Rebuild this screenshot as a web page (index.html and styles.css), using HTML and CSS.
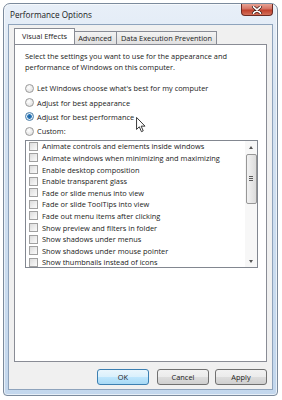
FILE: index.html
```html
<!DOCTYPE html>
<html lang="en">
<head>
    <meta charset="UTF-8">
    <title>Performance Options</title>
    <link rel="stylesheet" href="styles.css">
</head>
<body>
    <div class="window">
        <div class="titlebar">
            <span class="title">Performance Options</span>
            <span class="close">
                <svg width="12" height="8" viewBox="0 0 12 8">
                    <path d="M2.5 0.8 L9.5 7.2 M9.5 0.8 L2.5 7.2" stroke="#3a1b17" stroke-width="3" stroke-linecap="round"/>
                    <path d="M2.5 0.8 L9.5 7.2 M9.5 0.8 L2.5 7.2" stroke="#ffffff" stroke-width="1.6" stroke-linecap="round"/>
                </svg>
            </span>
        </div>

        <div class="client">
            <div class="tabs">
                <div class="tab tab-active">Visual Effects</div>
                <div class="tab">Advanced</div>
                <div class="tab">Data Execution Prevention</div>
            </div>

            <div class="panel">
                <p class="intro">Select the settings you want to use for the appearance and performance of Windows on this computer.</p>

                <div class="radios">
                    <div class="radio-row"><span class="radio"></span>Let Windows choose what's best for my computer</div>
                    <div class="radio-row"><span class="radio"></span>Adjust for best appearance</div>
                    <div class="radio-row"><span class="radio radio-on"></span>Adjust for best performance
                        <svg class="cursor" width="10" height="16" viewBox="0 0 11 18">
                            <path d="M0.5 0.5 L0.5 14 L3.6 11 L6 16.5 L8 15.6 L5.7 10.3 L10 10.3 Z" fill="#fff" stroke="#222" stroke-width="1" stroke-linejoin="round"/>
                        </svg>
                    </div>
                    <div class="radio-row"><span class="radio"></span>Custom:</div>
                </div>

                <div class="listbox">
                    <div class="items">
                        <div class="item"><span class="check"></span>Animate controls and elements inside windows</div>
                        <div class="item"><span class="check"></span>Animate windows when minimizing and maximizing</div>
                        <div class="item"><span class="check"></span>Enable desktop composition</div>
                        <div class="item"><span class="check"></span>Enable transparent glass</div>
                        <div class="item"><span class="check"></span>Fade or slide menus into view</div>
                        <div class="item"><span class="check"></span>Fade or slide ToolTips into view</div>
                        <div class="item"><span class="check"></span>Fade out menu items after clicking</div>
                        <div class="item"><span class="check"></span>Show preview and filters in folder</div>
                        <div class="item"><span class="check"></span>Show shadows under menus</div>
                        <div class="item"><span class="check"></span>Show shadows under mouse pointer</div>
                        <div class="item"><span class="check"></span>Show thumbnails instead of icons</div>
                    </div>
                    <div class="scrollbar">
                        <span class="arrow arrow-up"></span>
                        <div class="thumb"><span class="grip"></span></div>
                        <span class="arrow arrow-down"></span>
                    </div>
                </div>
            </div>

            <div class="buttons">
                <button class="btn btn-default">OK</button>
                <button class="btn">Cancel</button>
                <button class="btn">Apply</button>
            </div>
        </div>
    </div>
</body>
</html>
```

FILE: styles.css
```css
body {
    margin: 0;
    background: #ffffff;
    font-family: 'Open Sans', 'Noto Sans', sans-serif;
    font-size: 7.4px;
    color: #222222;
}
.window {
    margin: 3px 0 0 3px;
    width: 273px;
    height: 391px;
    border: 1px solid #7b8a9c;
    border-radius: 7px 7px 4px 4px;
    background: linear-gradient(to bottom, #e8eff8 0%, #d5e3f2 25%, #c3d7ed 100%);
    box-shadow: inset 0 0 0 1px rgba(255,255,255,0.6);
    display: flex;
    flex-direction: column;
}
.titlebar {
    height: 20px;
    display: flex;
    align-items: flex-start;
    justify-content: space-between;
}
.title {
    margin: 5px 0 0 6px;
    font-size: 8.2px;
    color: #202020;
}
.close {
    width: 30px;
    height: 11px;
    margin: 0 4px 0 0;
    border: 1px solid #6b2a22;
    border-top: none;
    border-radius: 0 0 4px 4px;
    background: linear-gradient(to bottom, #e8a394 0%, #d47162 45%, #c0402c 55%, #d4705a 100%);
    display: flex;
    align-items: center;
    justify-content: center;
}
.client {
    flex: 1;
    margin: 0 4px 5px 4px;
    background: #f0f0f0;
    border: 1px solid #8ea3bc;
    padding: 4px 5px 0 5px;
    display: flex;
    flex-direction: column;
}
.tabs {
    display: flex;
    align-items: flex-end;
    height: 15px;
    position: relative;
    z-index: 1;
}
.tab {
    height: 12px;
    line-height: 12px;
    padding: 0 4px;
    border: 1px solid #898c95;
    border-bottom: none;
    margin-left: -1px;
    background: linear-gradient(to bottom, #f3f3f3, #e0e0e0);
}
.tab-active {
    height: 15px;
    line-height: 14px;
    margin-left: 0;
    margin-right: -1px;
    background: #ffffff;
    padding: 0 7px;
    position: relative;
    z-index: 2;
}
.panel {
    box-sizing: border-box;
    height: 318px;
    background: #ffffff;
    border: 1px solid #898c95;
    padding: 6px 8px 0 10px;
}
.intro {
    margin: 0;
    line-height: 11px;
}
.radios {
    margin-top: 8px;
}
.radio-row {
    height: 14.4px;
    display: flex;
    align-items: center;
    position: relative;
}
.radio {
    width: 7px;
    height: 7px;
    border: 1px solid #9a9a9a;
    border-radius: 50%;
    background: radial-gradient(circle at 40% 35%, #ffffff, #d8d8d8);
    margin-right: 3px;
}
.radio-on {
    border-color: #4a7ea8;
    background: radial-gradient(circle at 50% 50%, #1e5f99 0, #2b7bbf 2px, #e6eef6 2.6px, #d0dbe6 100%);
}
.cursor {
    position: absolute;
    left: 111px;
    top: 7px;
}
.listbox {
    margin-top: 1px;
    width: 231px;
    height: 126px;
    border: 1px solid #828790;
    background: #ffffff;
    display: flex;
}
.items {
    flex: 1;
    overflow: hidden;
}
.item {
    height: 11.6px;
    display: flex;
    align-items: center;
    white-space: nowrap;
}
.check {
    width: 7px;
    height: 7px;
    margin: 0 4px 0 3px;
    border: 1px solid #a0a0a0;
    background: linear-gradient(135deg, #dcdcdc, #fbfbfb);
}
.scrollbar {
    width: 12px;
    background: #f7f7f7;
    display: flex;
    flex-direction: column;
    align-items: center;
}
.arrow {
    width: 0;
    height: 0;
    border-left: 2.5px solid transparent;
    border-right: 2.5px solid transparent;
}
.arrow-up {
    margin: 5px 0 5px;
    border-bottom: 3px solid #555;
}
.arrow-down {
    margin-top: auto;
    margin-bottom: 4px;
    border-top: 3px solid #555;
}
.thumb {
    width: 9px;
    height: 48px;
    border: 1px solid #979797;
    border-radius: 2px;
    background: linear-gradient(to right, #f2f2f2, #dcdcdc);
    display: flex;
    align-items: center;
    justify-content: center;
}
.grip {
    width: 4px;
    height: 5px;
    background: repeating-linear-gradient(to bottom, #5b5b5b 0, #5b5b5b 1px, transparent 1px, transparent 2px);
}
.buttons {
    display: flex;
    justify-content: flex-end;
    gap: 6px;
    margin-top: 7px;
}
.btn {
    width: 52px;
    height: 16px;
    padding: 0;
    font-family: inherit;
    font-size: 7.4px;
    color: #222222;
    border: 1px solid #707070;
    border-radius: 3px;
    background: linear-gradient(to bottom, #f2f2f2 0%, #ebebeb 50%, #dddddd 51%, #cfcfcf 100%);
}
.btn-default {
    margin-right: 2px;
    border-color: #3c7fb1;
    background: linear-gradient(to bottom, #eaf6fd 0%, #d9f0fc 50%, #bee6fd 51%, #a7d9f5 100%);
}
```
